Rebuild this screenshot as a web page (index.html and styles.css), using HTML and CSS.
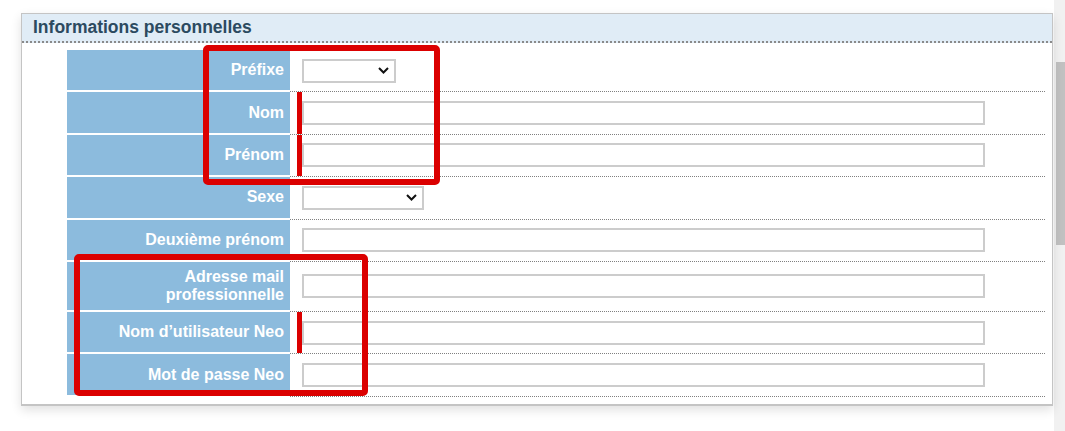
FILE: index.html
```html
<!DOCTYPE html>
<html lang="fr">
<head>
  <meta charset="UTF-8">
  <meta name="viewport" content="width=device-width, initial-scale=1.0">
  <title>Informations personnelles</title>
  <link rel="stylesheet" href="styles.css">
</head>
<body>
  <div class="page">
    <div class="panel">
      <h2 class="panel-title">Informations personnelles</h2>
      <div class="form-grid">
        <label class="label" for="prefix">Préfixe</label>
        <div class="value">
          <div class="field">
            <div class="select-wrap prefix">
              <select id="prefix"><option></option></select>
              <svg class="chevron" width="11" height="7" viewBox="0 0 11 7"><path d="M1 1 L5.5 5.5 L10 1" fill="none" stroke="#111" stroke-width="2"/></svg>
            </div>
          </div>
        </div>

        <label class="label" for="nom">Nom</label>
        <div class="value">
          <div class="field req"><input type="text" id="nom"></div>
        </div>

        <label class="label" for="prenom">Prénom</label>
        <div class="value">
          <div class="field req"><input type="text" id="prenom"></div>
        </div>

        <label class="label" for="sexe">Sexe</label>
        <div class="value">
          <div class="field">
            <div class="select-wrap sexe">
              <select id="sexe"><option></option></select>
              <svg class="chevron" width="11" height="7" viewBox="0 0 11 7"><path d="M1 1 L5.5 5.5 L10 1" fill="none" stroke="#111" stroke-width="2"/></svg>
            </div>
          </div>
        </div>

        <label class="label" for="deuxieme">Deuxième prénom</label>
        <div class="value">
          <div class="field"><input type="text" id="deuxieme"></div>
        </div>

        <label class="label" for="mail">Adresse mail professionnelle</label>
        <div class="value">
          <div class="field"><input type="text" id="mail"></div>
        </div>

        <label class="label" for="neo-user">Nom d’utilisateur Neo</label>
        <div class="value">
          <div class="field req"><input type="text" id="neo-user"></div>
        </div>

        <label class="label" for="neo-pass">Mot de passe Neo</label>
        <div class="value">
          <div class="field"><input type="password" id="neo-pass"></div>
        </div>
      </div>
    </div>

    <!-- annotation frames drawn over the form -->
    <div class="mark mark-name"></div>
    <div class="mark mark-neo"></div>
  </div>
  <div class="scrollbar"><div class="thumb"></div></div>
</body>
</html>
```

FILE: styles.css
```css
body {
  margin: 0;
  height: 431px;
  display: flex;
  overflow: hidden;
  background: #fff;
  font-family: "Liberation Sans", Arial, sans-serif;
}
.page {
  position: relative;
  flex: 1;
  padding: 13px 1px 0 21px;
}
.panel {
  background: #fff;
  border: 1px solid #c4c4c4;
  border-bottom-width: 2px;
  padding-bottom: 7px;
  box-shadow: 0 4px 10px rgba(0, 0, 0, 0.12);
}
.panel-title {
  margin: 0;
  height: 27px;
  line-height: 27px;
  padding-left: 11px;
  font-size: 17.5px;
  font-weight: bold;
  color: #2c4a60;
  background: #e0ecf6;
  border-bottom: 2px dotted #8a8a8a;
}
.form-grid {
  display: grid;
  grid-template-columns: 223px 755px;
  grid-auto-rows: minmax(42.4px, auto);
  margin: 7px 0 0 45px;
}
.label {
  display: flex;
  align-items: center;
  justify-content: flex-end;
  text-align: right;
  padding: 6px 6px 6px 40px;
  background: #8cbbdd;
  color: #fff;
  font-size: 16px;
  font-weight: bold;
  line-height: 18px;
  border-bottom: 2px solid #fff;
}
.value {
  display: flex;
  padding-left: 7px;
  border-bottom: 1px dotted #808080;
}
.field {
  flex: 1;
  display: flex;
  align-items: center;
  border-left: 5px solid transparent;
}
.field.req {
  border-left-color: #db0000;
}
input {
  box-sizing: border-box;
  width: 683px;
  height: 24px;
  margin: 0;
  border: 2px solid #cccccc;
  background: #fff;
}
.select-wrap {
  display: grid;
  align-items: center;
}
.select-wrap select,
.select-wrap .chevron {
  grid-area: 1 / 1;
}
.select-wrap select {
  appearance: none;
  box-sizing: border-box;
  height: 24px;
  margin: 0;
  border: 2px solid #cccccc;
  border-radius: 0;
  background: #fff;
}
.select-wrap .chevron {
  justify-self: end;
  margin-right: 7px;
}
.prefix select {
  width: 94px;
}
.sexe select {
  width: 122px;
}
.mark {
  position: absolute;
  border: 6px solid #db0000;
  border-radius: 5px;
  box-sizing: border-box;
}
.mark-name {
  left: 203px;
  top: 45px;
  width: 237px;
  height: 140px;
}
.mark-neo {
  left: 74px;
  top: 254px;
  width: 294px;
  height: 142px;
}
.scrollbar {
  width: 11px;
  box-sizing: border-box;
  padding: 62px 0 0 2px;
  background: #f1f1f1;
}
.thumb {
  height: 183px;
  background: #c1c1c1;
}
```
